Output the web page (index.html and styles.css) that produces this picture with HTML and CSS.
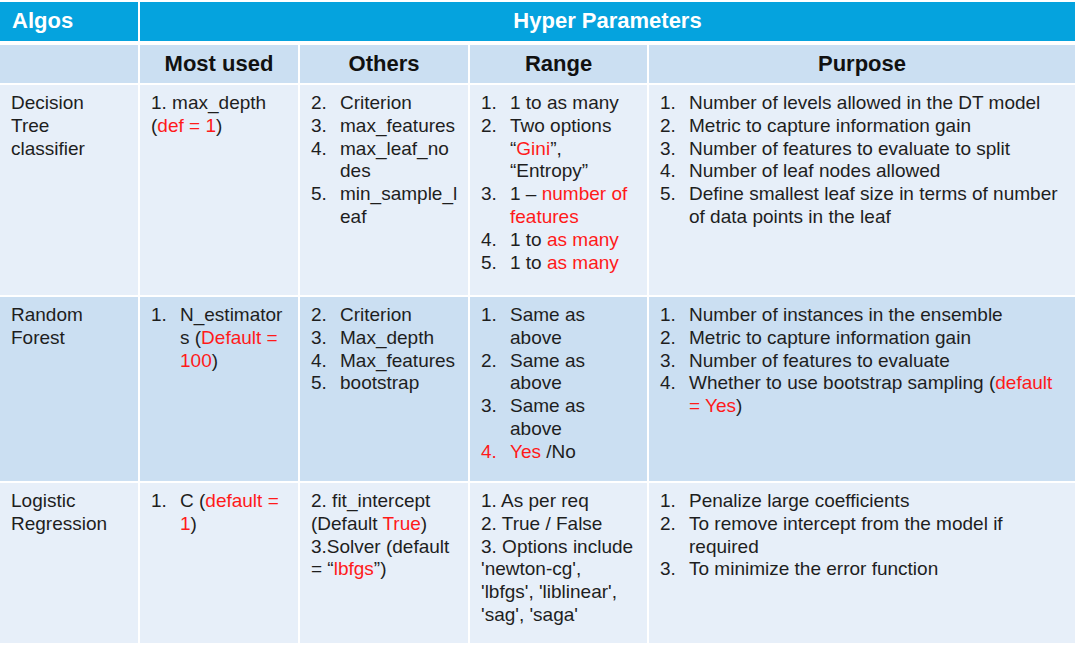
FILE: index.html
```html
<!DOCTYPE html>
<html lang="en">
<head>
<meta charset="utf-8">
<title>Hyper Parameters</title>
<link rel="stylesheet" href="styles.css">
</head>
<body>
<div class="tbl">
  <div class="cell top algos">Algos</div>
  <div class="cell top hyper">Hyper Parameters</div>

  <div class="cell sub"></div>
  <div class="cell sub">Most used</div>
  <div class="cell sub">Others</div>
  <div class="cell sub">Range</div>
  <div class="cell sub">Purpose</div>

  <!-- Decision Tree -->
  <div class="cell light">Decision<br>Tree<br>classifier</div>
  <div class="cell light">1. max_depth<br>(<span class="r">def = 1</span>)</div>
  <div class="cell light">
    <div class="it"><span class="n">2.</span><span>Criterion</span></div>
    <div class="it"><span class="n">3.</span><span>max_features</span></div>
    <div class="it"><span class="n">4.</span><span>max_leaf_no<br>des</span></div>
    <div class="it"><span class="n">5.</span><span>min_sample_l<br>eaf</span></div>
  </div>
  <div class="cell light">
    <div class="it"><span class="n">1.</span><span>1 to as many</span></div>
    <div class="it"><span class="n">2.</span><span>Two options<br>“<span class="r">Gini</span>”,<br>“Entropy”</span></div>
    <div class="it"><span class="n">3.</span><span>1 – <span class="r">number of<br>features</span></span></div>
    <div class="it"><span class="n">4.</span><span>1 to <span class="r">as many</span></span></div>
    <div class="it"><span class="n">5.</span><span>1 to <span class="r">as many</span></span></div>
  </div>
  <div class="cell light">
    <div class="it"><span class="n">1.</span><span>Number of levels allowed in the DT model</span></div>
    <div class="it"><span class="n">2.</span><span>Metric to capture information gain</span></div>
    <div class="it"><span class="n">3.</span><span>Number of features to evaluate to split</span></div>
    <div class="it"><span class="n">4.</span><span>Number of leaf nodes allowed</span></div>
    <div class="it"><span class="n">5.</span><span>Define smallest leaf size in terms of number<br>of data points in the leaf</span></div>
  </div>

  <!-- Random Forest -->
  <div class="cell dark">Random<br>Forest</div>
  <div class="cell dark">
    <div class="it"><span class="n">1.</span><span>N_estimator<br>s (<span class="r">Default =<br>100</span>)</span></div>
  </div>
  <div class="cell dark">
    <div class="it"><span class="n">2.</span><span>Criterion</span></div>
    <div class="it"><span class="n">3.</span><span>Max_depth</span></div>
    <div class="it"><span class="n">4.</span><span>Max_features</span></div>
    <div class="it"><span class="n">5.</span><span>bootstrap</span></div>
  </div>
  <div class="cell dark">
    <div class="it"><span class="n">1.</span><span>Same as<br>above</span></div>
    <div class="it"><span class="n">2.</span><span>Same as<br>above</span></div>
    <div class="it"><span class="n">3.</span><span>Same as<br>above</span></div>
    <div class="it"><span class="n r">4.</span><span><span class="r">Yes</span> /No</span></div>
  </div>
  <div class="cell dark">
    <div class="it"><span class="n">1.</span><span>Number of instances in the ensemble</span></div>
    <div class="it"><span class="n">2.</span><span>Metric to capture information gain</span></div>
    <div class="it"><span class="n">3.</span><span>Number of features to evaluate</span></div>
    <div class="it"><span class="n">4.</span><span>Whether to use bootstrap sampling (<span class="r">default<br>= Yes</span>)</span></div>
  </div>

  <!-- Logistic Regression -->
  <div class="cell light">Logistic<br>Regression</div>
  <div class="cell light">
    <div class="it"><span class="n">1.</span><span>C (<span class="r">default =<br>1</span>)</span></div>
  </div>
  <div class="cell light">2. fit_intercept<br>(Default <span class="r">True</span>)<br>3.Solver (default<br>= “<span class="r">lbfgs</span>”)</div>
  <div class="cell light">1. As per req<br>2. True / False<br>3. Options include<br>'newton-cg',<br>'lbfgs', 'liblinear',<br>'sag', 'saga'</div>
  <div class="cell light">
    <div class="it"><span class="n">1.</span><span>Penalize large coefficients</span></div>
    <div class="it"><span class="n">2.</span><span>To remove intercept from the model if<br>required</span></div>
    <div class="it"><span class="n">3.</span><span>To minimize the error function</span></div>
  </div>
</div>
</body>
</html>
```

FILE: styles.css
```css
html, body {
  margin: 0;
  padding: 0;
  background: #ffffff;
}

body {
  font-family: "Liberation Sans", Arial, sans-serif;
  color: #1e1e1e;
}

.tbl {
  display: grid;
  grid-template-columns: 138px 158px 168px 177px 426px;
  grid-template-rows: 41px 38px 210px 184px 160px;
  gap: 2px;
  padding-top: 2px;
  width: 1075px;
}

.cell {
  font-size: 19px;
  line-height: 22.8px;
  padding: 7px 10px 0 11px;
  white-space: nowrap;
}

.top {
  background: #05a3de;
  color: #ffffff;
  font-weight: bold;
  font-size: 22px;
  display: flex;
  align-items: center;
  margin-bottom: 2px;
  padding: 0 12px;
}

.hyper {
  grid-column: 2 / span 4;
  justify-content: center;
}

.sub {
  background: #cbdff2;
  color: #111111;
  font-weight: bold;
  font-size: 22px;
  display: flex;
  align-items: center;
  justify-content: center;
  padding: 0;
}

.light {
  background: #e7eff9;
}

.dark {
  background: #cbdff2;
}

.it {
  display: flex;
}

.n {
  flex: none;
  width: 29px;
}

.r {
  color: #ff1a1a;
}
```
